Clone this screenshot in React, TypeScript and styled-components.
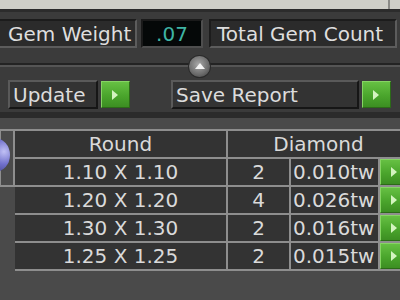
import styled, { createGlobalStyle } from "styled-components";

const GlobalStyle = createGlobalStyle`
  html, body {
    margin: 0;
    padding: 0;
    background: #4a4a4a;
  }
  body {
    font-family: "DejaVu Sans", Verdana, sans-serif;
  }
`;

const Page = styled.div`
  width: 400px;
  height: 300px;
  overflow: hidden;
  background: #4a4a4a;
  color: #dcdcdc;
  font-size: 20px;
`;

const TopStrip = styled.div`
  height: 9px;
  background: #cfcfc8;
  border-bottom: 3px solid #2c2c2c;
  display: flex;
  justify-content: flex-end;
  padding-right: 10px;
`;

const StripTick = styled.div`
  width: 2px;
  height: 9px;
  background: #8a8a86;
`;

const Panel = styled.div`
  background: #3b3b3b;
  padding-top: 7px;
`;

const FieldRow = styled.div`
  display: flex;
  align-items: stretch;
  height: 29px;
  margin-left: -4px;
  gap: 2px;
`;

const LabelBox = styled.div<{ $w: number; $pad?: number; $gapBefore?: number }>`
  width: ${(p) => p.$w}px;
  flex-shrink: 0;
  box-sizing: border-box;
  background: #2b2b2b;
  border: 2px solid;
  border-color: #1c1c1c #5c5c5c #5c5c5c #1c1c1c;
  display: flex;
  align-items: center;
  padding-left: ${(p) => p.$pad ?? 10}px;
  margin-left: ${(p) => p.$gapBefore ?? 0}px;
  margin-right: 2px;
  white-space: nowrap;
  overflow: hidden;
  color: #dedede;
`;

const ValueBox = styled.div<{ $w: number }>`
  width: ${(p) => p.$w}px;
  flex-shrink: 0;
  box-sizing: border-box;
  background: #050808;
  border: 2px solid;
  border-color: #1a1a1a #4e4e4e #4e4e4e #1a1a1a;
  display: flex;
  align-items: center;
  justify-content: center;
  color: #3fb4a4;
`;

const KnobRow = styled.div`
  height: 31px;
  display: flex;
  flex-direction: column;
  justify-content: center;
  align-items: center;
  position: relative;
`;

const KnobLine = styled.div`
  width: 100%;
  height: 2px;
  margin-top: 2px;
  background: #232323;
  border-bottom: 2px solid #555;
`;

const Knob = styled.div`
  position: absolute;
  left: 189px;
  top: 8px;
  width: 21px;
  height: 21px;
  border-radius: 50%;
  background: radial-gradient(circle at 45% 40%, #a8a8a8 0%, #6a6a6a 60%, #3a3a3a 100%);
  box-shadow: 0 0 0 1px #2a2a2a;
  display: flex;
  align-items: center;
  justify-content: center;
`;

const KnobArrow = styled.div`
  width: 0;
  height: 0;
  border-left: 5px solid transparent;
  border-right: 5px solid transparent;
  border-bottom: 6px solid #f4f4f4;
  margin-top: -2px;
`;

const ButtonRow = styled.div`
  display: flex;
  align-items: center;
  height: 31px;
  padding-left: 8px;
  padding-bottom: 2px;
`;

const ActionGroup = styled.div<{ $gapAfter?: number }>`
  display: flex;
  align-items: center;
  gap: 3px;
  margin-right: ${(p) => p.$gapAfter ?? 0}px;
`;

const ActionLabel = styled.div<{ $w: number }>`
  width: ${(p) => p.$w}px;
  height: 29px;
  box-sizing: border-box;
  background: #333;
  border: 2px solid;
  border-color: #5a5a5a #161616 #161616 #5a5a5a;
  display: flex;
  align-items: center;
  padding-left: 3px;
  color: #dcdcdc;
  white-space: nowrap;
  overflow: hidden;
`;

const GreenButton = styled.div<{ $w?: number; $h?: number }>`
  width: ${(p) => p.$w ?? 29}px;
  height: ${(p) => p.$h ?? 27}px;
  flex-shrink: 0;
  box-sizing: border-box;
  background: linear-gradient(180deg, #66c043 0%, #4aa52c 55%, #3c8e22 100%);
  border: 1px solid;
  border-color: #86d464 #2c6a18 #2c6a18 #86d464;
  display: flex;
  align-items: center;
  padding-left: 10px;
`;

const Arrow = styled.div`
  width: 0;
  height: 0;
  border-top: 5px solid transparent;
  border-bottom: 5px solid transparent;
  border-left: 6px solid #d4f4c0;
`;

const Band = styled.div`
  height: 6px;
  background: #2b2b2b;
`;

const Lower = styled.div`
  padding-top: 11px;
  position: relative;
`;

const Sphere = styled.div`
  position: absolute;
  left: -20px;
  top: 20px;
  width: 30px;
  height: 34px;
  border-radius: 50%;
  background: radial-gradient(circle at 80% 40%, #c0c0f4 0%, #7070cc 40%, #2a2a60 100%);
`;

const Grid = styled.table`
  border-collapse: collapse;
  table-layout: fixed;
  width: 410px;
  margin-left: -1px;
`;

const Cell = styled.td<{ $align?: string; $bare?: boolean }>`
  height: 26px;
  padding: 0;
  box-sizing: border-box;
  border: 2px solid ${(p) => (p.$bare ? "transparent" : "#8e8e8e")};
  background: ${(p) => (p.$bare ? "transparent" : "#333")};
  text-align: ${(p) => p.$align ?? "center"};
  white-space: nowrap;
  overflow: hidden;
  color: #dadada;
  line-height: 26px;
`;

const ButtonCell = styled.td`
  padding: 0;
  border: 2px solid #8e8e8e;
  border-right: none;
  height: 26px;
  background: #4aa52c;
`;

const rows = [
  { size: "1.10 X 1.10", count: 2, weight: "0.010tw" },
  { size: "1.20 X 1.20", count: 4, weight: "0.026tw" },
  { size: "1.30 X 1.30", count: 2, weight: "0.016tw" },
  { size: "1.25 X 1.25", count: 2, weight: "0.015tw" },
];

export default function App() {
  return (
    <Page>
      <GlobalStyle />
      <TopStrip>
        <StripTick />
      </TopStrip>
      <Panel>
        <FieldRow>
          <LabelBox $w={141}>Gem Weight</LabelBox>
          <ValueBox $w={62}>.07</ValueBox>
          <LabelBox $w={188} $pad={6} $gapBefore={4}>
            Total Gem Count
          </LabelBox>
          <ValueBox $w={20} />
        </FieldRow>
        <KnobRow>
          <KnobLine />
          <Knob>
            <KnobArrow />
          </Knob>
        </KnobRow>
        <ButtonRow>
          <ActionGroup $gapAfter={41}>
            <ActionLabel $w={90}>Update</ActionLabel>
            <GreenButton>
              <Arrow />
            </GreenButton>
          </ActionGroup>
          <ActionGroup>
            <ActionLabel $w={188}>Save Report</ActionLabel>
            <GreenButton>
              <Arrow />
            </GreenButton>
          </ActionGroup>
        </ButtonRow>
      </Panel>
      <Band />
      <Lower>
        <Sphere />
        <Grid>
          <colgroup>
            <col style={{ width: 14 }} />
            <col style={{ width: 213 }} />
            <col style={{ width: 63 }} />
            <col style={{ width: 89 }} />
            <col style={{ width: 31 }} />
          </colgroup>
          <tbody>
            <tr>
              <Cell rowSpan={2} style={{ background: "transparent" }} />
              <Cell>Round</Cell>
              <Cell colSpan={3}>Diamond</Cell>
            </tr>
            {rows.map((r, i) => (
              <tr key={r.size}>
                {i > 0 && <Cell $bare style={{ borderLeft: "none", borderBottom: "none" }} />}
                <Cell>{r.size}</Cell>
                <Cell>{r.count}</Cell>
                <Cell $align="left" style={{ paddingLeft: 2 }}>
                  {r.weight}
                </Cell>
                <ButtonCell>
                  <GreenButton $w={31} $h={26}>
                    <Arrow />
                  </GreenButton>
                </ButtonCell>
              </tr>
            ))}
          </tbody>
        </Grid>
      </Lower>
    </Page>
  );
}
